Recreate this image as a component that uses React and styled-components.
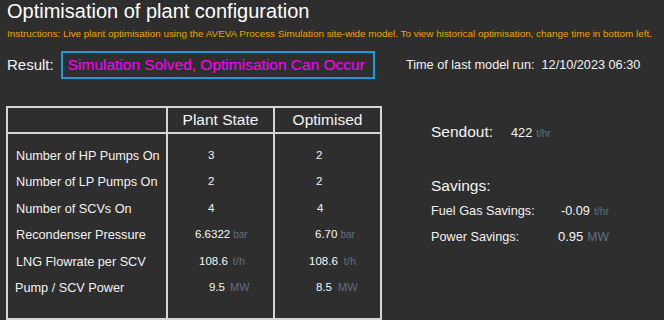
import React from "react";
import styled, { createGlobalStyle } from "styled-components";

const Global = createGlobalStyle`
  html, body { margin: 0; padding: 0; background: #2e2e2e; }
  body { font-family: "Liberation Sans", Arial, sans-serif; color: #f2f2f2; }
  * { box-sizing: border-box; }
`;

const Page = styled.div`
  width: 664px;
  height: 320px;
  overflow: hidden;
  padding: 0 7px;
  background: #2e2e2e;
`;

const Title = styled.h1`
  margin: 0;
  font-size: 20px;
  line-height: 23px;
  font-weight: 400;
  color: #ffffff;
  white-space: nowrap;
`;

const Instructions = styled.p`
  margin: 5px 0 0;
  font-size: 9.9px;
  line-height: 12px;
  color: #e6a800;
  white-space: nowrap;
`;

const ResultRow = styled.div`
  display: flex;
  align-items: center;
  margin-top: 11px;
  height: 28px;
`;

const ResultLabel = styled.span`
  font-size: 15px;
  line-height: 18px;
  color: #f4f4f4;
`;

const StatusBox = styled.div`
  margin-left: 7px;
  height: 28px;
  border: 2px solid #1c9ad8;
  padding: 0 8px 0 5px;
  font-size: 15.5px;
  line-height: 24px;
  color: #ff00ff;
  white-space: nowrap;
`;

const RunTime = styled.span`
  margin-left: 31px;
  font-size: 12.7px;
  line-height: 18px;
  color: #f2f2f2;
  white-space: pre;
`;

const Main = styled.div`
  display: flex;
  align-items: flex-start;
  margin-top: 27px;
  margin-left: -1px;
`;

const Table = styled.table`
  border-collapse: collapse;
  border: 2px solid #d6d6d6;
  table-layout: fixed;
  width: 374px;
`;

const Col = styled.col`
  width: ${(p) => p.$w}px;
`;

const HeadCell = styled.th`
  border: 2px solid #d6d6d6;
  height: 26px;
  padding: 0;
  font-size: 15.5px;
  line-height: 24px;
  font-weight: 400;
  color: #f4f4f4;
  text-align: center;
  white-space: nowrap;
`;

const BodyRow = styled.tr`
  height: 26.5px;
  &:first-child > td { padding-top: 8.6px; }
  &:last-child > td { padding-bottom: 16.5px; }
`;

const LabelCell = styled.td`
  border-left: 2px solid #d6d6d6;
  border-right: 2px solid #d6d6d6;
  padding: 0 0 0 ${(p) => p.$indent}px;
  font-size: 12.7px;
  line-height: 26.5px;
  color: #f2f2f2;
  white-space: nowrap;
  vertical-align: top;
`;

const ValueCell = styled.td`
  border-left: 2px solid #d6d6d6;
  border-right: 2px solid #d6d6d6;
  padding: 0 0 0 ${(p) => p.$indent}px;
  font-size: 11.5px;
  line-height: 24.5px;
  color: #f6f6f6;
  white-space: nowrap;
  vertical-align: top;
`;

const Unit = styled.span`
  margin-left: ${(p) => p.$gap ?? 4}px;
  font-size: ${(p) => p.$size ?? 11}px;
  color: #5f6f80;
`;

const Side = styled.div`
  margin-left: 49px;
  padding-top: 16px;
  display: flex;
  flex-direction: column;
`;

const SendoutRow = styled.div`
  display: flex;
  align-items: baseline;
  line-height: 20px;
`;

const Heading = styled.span`
  font-size: 15.5px;
  color: #f4f4f4;
`;

const Figure = styled.span`
  margin-left: ${(p) => p.$gap}px;
  font-size: ${(p) => p.$size ?? 12.7}px;
  color: #f6f6f6;
`;

const SavingsHeading = styled.div`
  margin-top: 32px;
  font-size: 15.5px;
  line-height: 20px;
  color: #f4f4f4;
`;

const SavingsRow = styled.div`
  display: flex;
  align-items: baseline;
  margin-top: ${(p) => p.$top}px;
  line-height: 20px;
  font-size: 12.7px;
`;

const SavingsLabel = styled.span`
  width: 127px;
  flex: none;
  color: #f2f2f2;
  white-space: nowrap;
`;

const rows = [
  { label: "Number of HP Pumps On", li: 8, plant: { v: "3", i: 40 }, opt: { v: "2", i: 41 } },
  { label: "Number of LP Pumps On", li: 8, plant: { v: "2", i: 40 }, opt: { v: "2", i: 41 } },
  { label: "Number of SCVs On", li: 8, plant: { v: "4", i: 40 }, opt: { v: "4", i: 42 } },
  { label: "Recondenser Pressure", li: 8, plant: { v: "6.6322", u: "bar", s: 10, g: 3, i: 27 }, opt: { v: "6.70", u: "bar", s: 10, g: 3, i: 40 } },
  { label: "LNG Flowrate per SCV", li: 8, plant: { v: "108.6", u: "t/h", g: 5, i: 31 }, opt: { v: "108.6", u: "t/h", g: 6, i: 34 } },
  { label: "Pump / SCV Power", li: 7, plant: { v: "9.5", u: "MW", g: 5, i: 41 }, opt: { v: "8.5", u: "MW", g: 6, i: 41 } },
];

const Value = ({ d }) => (
  <ValueCell $indent={d.i}>
    {d.v}
    {d.u && (
      <Unit $gap={d.g} $size={d.s}>
        {d.u}
      </Unit>
    )}
  </ValueCell>
);

export default function App() {
  return (
    <>
      <Global />
      <Page>
        <Title>Optimisation of plant configuration</Title>
        <Instructions>
          Instructions: Live plant optimisation using the AVEVA Process Simulation site-wide model. To view historical optimisation, change time in bottom left.
        </Instructions>
        <ResultRow>
          <ResultLabel>Result:</ResultLabel>
          <StatusBox>Simulation Solved, Optimisation Can Occur</StatusBox>
          <RunTime>{"Time of last model run:  12/10/2023 06:30"}</RunTime>
        </ResultRow>
        <Main>
          <Table>
            <colgroup>
              <Col $w={160} />
              <Col $w={107} />
              <Col $w={107} />
            </colgroup>
            <thead>
              <tr>
                <HeadCell />
                <HeadCell>Plant State</HeadCell>
                <HeadCell>Optimised</HeadCell>
              </tr>
            </thead>
            <tbody>
              {rows.map((r) => (
                <BodyRow key={r.label}>
                  <LabelCell $indent={r.li}>{r.label}</LabelCell>
                  <Value d={r.plant} />
                  <Value d={r.opt} />
                </BodyRow>
              ))}
            </tbody>
          </Table>
          <Side>
            <SendoutRow>
              <Heading>Sendout:</Heading>
              <Figure $gap={18}>422</Figure>
              <Unit $gap={4} $size={10}>t/hr</Unit>
            </SendoutRow>
            <SavingsHeading>Savings:</SavingsHeading>
            <SavingsRow $top={5}>
              <SavingsLabel>Fuel Gas Savings:</SavingsLabel>
              <Figure $gap={3}>-0.09</Figure>
              <Unit $gap={4} $size={10.4}>t/hr</Unit>
            </SavingsRow>
            <SavingsRow $top={4.5}>
              <SavingsLabel>Power Savings:</SavingsLabel>
              <Figure $gap={0} $size={13}>0.95</Figure>
              <Unit $gap={4} $size={12.2}>MW</Unit>
            </SavingsRow>
          </Side>
        </Main>
      </Page>
    </>
  );
}
